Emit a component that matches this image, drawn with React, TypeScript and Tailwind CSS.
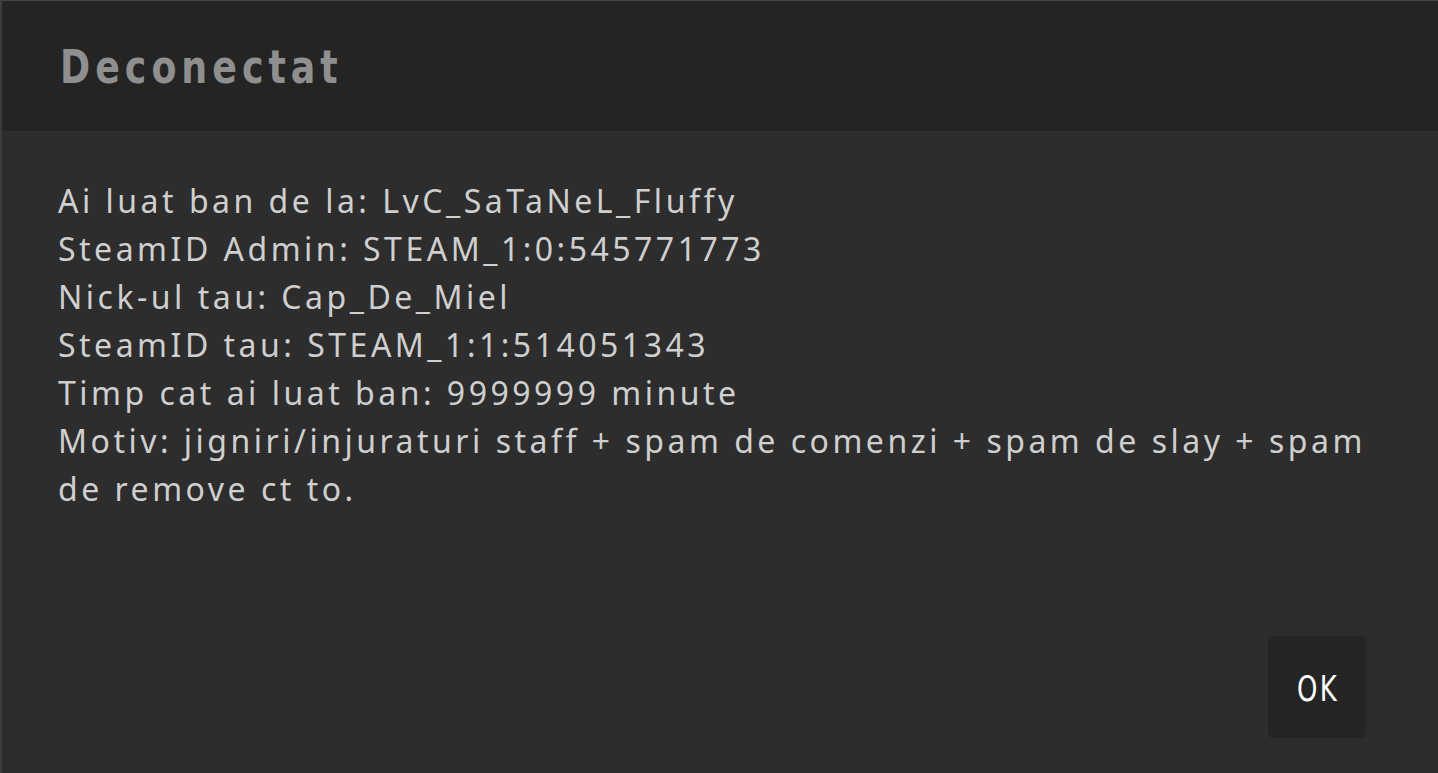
export default function App() {
  const lines = [
    "Ai luat ban de la: LvC_SaTaNeL_Fluffy",
    "SteamID Admin: STEAM_1:0:545771773",
    "Nick-ul tau: Cap_De_Miel",
    "SteamID tau: STEAM_1:1:514051343",
    "Timp cat ai luat ban: 9999999 minute",
    "Motiv: jigniri/injuraturi staff + spam de comenzi + spam de slay + spam de remove ct to.",
  ];
  return (
    <div className="w-[1438px] h-[773px] bg-[#2d2d2d] flex flex-col border-l-2 border-t border-l-[#3c3c3c] border-t-[#454545] overflow-hidden">
      <div className="h-[130px] shrink-0 bg-[#242424] flex items-center pl-[58px]">
        <h1
          className="text-[47px] font-bold text-[#8f8f8f] tracking-[5.8px] leading-none scale-x-[0.86] origin-left"
          style={{ fontFamily: '"DejaVu Sans Condensed", "DejaVu Sans", sans-serif' }}
        >
          Deconectat
        </h1>
      </div>
      <div className="flex-1 flex flex-col pl-[56px] pr-[60px] pt-[46px] pb-[35px]">
        <div
          className="text-[32px] leading-[48px] text-[#cfcfcf] tracking-[3.5px] max-w-[1340px]"
          style={{ fontFamily: '"Noto Sans", sans-serif' }}
        >
          {lines.map((l, i) => (
            <div key={i}>{l}</div>
          ))}
        </div>
        <div className="mt-auto flex justify-end pr-[12px]">
          <button
            className="w-[98px] h-[102px] bg-[#252525] rounded-[5px] text-white text-[36px] leading-none flex items-center justify-center pt-1"
          >
            <span
              className="block scale-x-[0.8] tracking-[3px] pl-[3px]"
              style={{ fontFamily: '"DejaVu Sans Condensed", "DejaVu Sans", sans-serif' }}
            >
              OK
            </span>
          </button>
        </div>
      </div>
    </div>
  );
}
